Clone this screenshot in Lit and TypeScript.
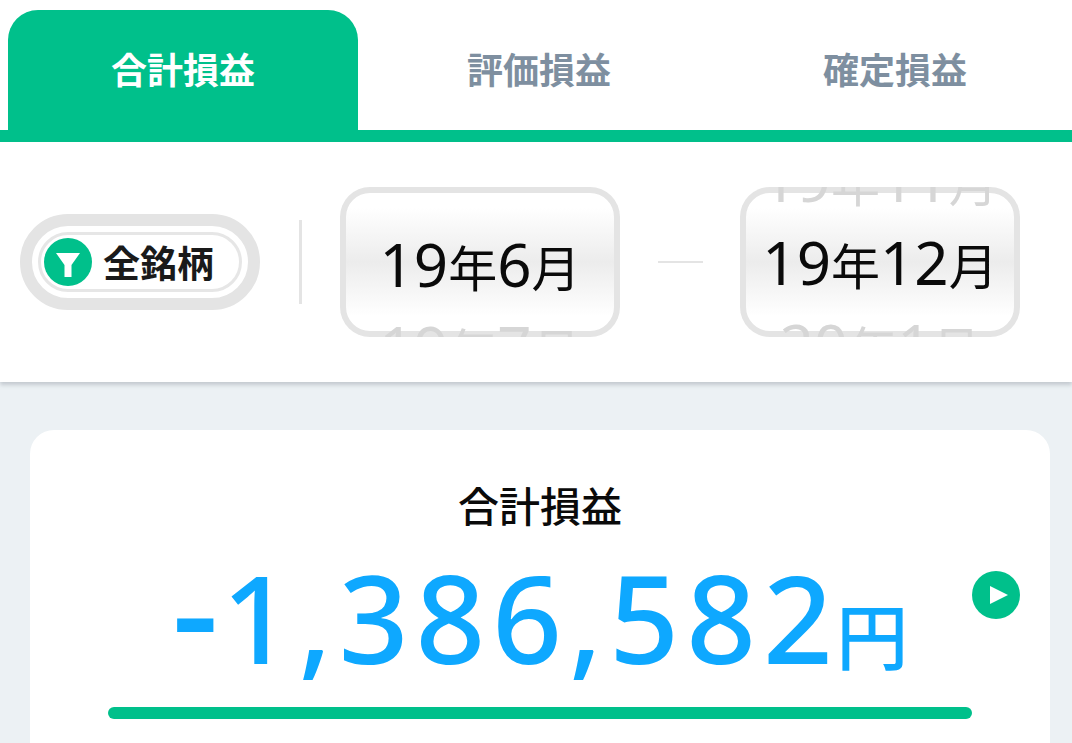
import { LitElement, html, css } from "lit";
import { customElement } from "lit/decorators.js";

const date = (y: string, m: string) =>
  html`<span class="num">${y}</span><span class="kj">年</span><span class="num">${m}</span><span class="kj">月</span>`;

@customElement("app-root")
export class AppRoot extends LitElement {
  static styles = css`
    :host {
      display: block;
      width: 1072px;
      height: 743px;
      overflow: hidden;
      background: #ecf1f4;
      font-family: "Noto Sans", "Noto Sans CJK JP", sans-serif;
    }
    .tabs {
      display: grid;
      grid-template-columns: repeat(3, 350px);
      column-gap: 6px;
      height: 120px;
      padding: 10px 0 0 8px;
      background: #fff;
      border-bottom: 12px solid #00c08b;
    }
    .tab {
      display: flex;
      align-items: center;
      justify-content: center;
      padding-bottom: 3px;
      font-size: 36px;
      font-weight: 700;
      color: #7e8fa0;
      border-radius: 30px 30px 0 0;
    }
    .tab.on {
      background: #00c08b;
      color: #fff;
    }
    .filter {
      display: flex;
      align-items: center;
      height: 240px;
      padding-left: 20px;
      background: #fff;
      box-shadow: 0 3px 4px rgba(120, 130, 140, 0.35);
      position: relative;
    }
    .pill {
      box-sizing: border-box;
      width: 240px;
      height: 96px;
      border: 12px solid #e4e4e4;
      border-radius: 48px;
      padding: 6px;
    }
    .pill-in {
      box-sizing: border-box;
      display: flex;
      align-items: center;
      gap: 11px;
      height: 60px;
      border: 3px solid #e6e6e6;
      border-radius: 30px;
      padding-left: 3px;
      font-size: 37px;
      font-weight: 700;
      color: #1a1a1a;
    }
    .ic {
      display: block;
      flex: none;
      width: 48px;
      height: 48px;
    }
    .div {
      width: 3px;
      height: 84px;
      margin: 0 38px 0 39px;
      background: #e4e4e4;
    }
    .picker {
      box-sizing: border-box;
      width: 280px;
      height: 150px;
      border-radius: 30px;
      overflow: hidden;
      display: flex;
      flex-direction: column;
      align-items: center;
      justify-content: center;
      background: linear-gradient(#fff 14%, #ececec 50%, #fff 86%);
      box-shadow: inset 0 0 0 6px #e4e4e4;
    }
    .picker.low {
      padding-top: 5px;
    }
    .row {
      flex: none;
      height: 83px;
      line-height: 83px;
      text-align: center;
      color: #d6d6d6;
      white-space: nowrap;
    }
    .row.sel {
      color: #0a0a0a;
    }
    .num {
      font-size: 60px;
    }
    .kj {
      font-size: 49px;
    }
    .dash {
      width: 45px;
      height: 2px;
      margin: 0 37px 0 38px;
      background: #e4e4e4;
    }
    .body {
      padding: 48px 22px 0 30px;
    }
    .card {
      position: relative;
      height: 340px;
      background: #fff;
      border-radius: 24px;
      padding-top: 48px;
      text-align: center;
    }
    .title {
      font-size: 41px;
      font-weight: 500;
      line-height: 56px;
      color: #0a0a0a;
    }
    .amount {
      display: flex;
      justify-content: center;
      align-items: baseline;
      color: #0ea8ff;
      line-height: 120px;
      margin-top: 14px;
    }
    .big {
      font-size: 122px;
      font-weight: 500;
      letter-spacing: 7px;
    }
    .minus {
      font-size: 146px;
      font-weight: 500;
      line-height: 120px;
      letter-spacing: 3px;
    }
    .yen {
      font-size: 72px;
      font-weight: 500;
      margin-left: -3.5px;
    }
    .play {
      position: absolute;
      top: 141px;
      left: 942px;
    }
    .bar {
      height: 12px;
      margin: 11px 78px 0;
      border-radius: 6px;
      background: #00c08b;
    }
  `;

  render() {
    return html`
      <div class="tabs">
        <div class="tab on">合計損益</div>
        <div class="tab">評価損益</div>
        <div class="tab">確定損益</div>
      </div>
      <div class="filter">
        <div class="pill">
          <div class="pill-in">
            <svg class="ic" viewBox="0 0 48 48">
              <circle cx="24" cy="24" r="24" fill="#00c08b" />
              <path d="M12 15H36L27.5 27V39H20.5V27Z" fill="#fff" />
            </svg>
            全銘柄
          </div>
        </div>
        <div class="div"></div>
        <div class="picker low">
          <div class="row"></div>
          <div class="row sel">${date("19", "6")}</div>
          <div class="row">${date("19", "7")}</div>
        </div>
        <div class="dash"></div>
        <div class="picker">
          <div class="row">${date("19", "11")}</div>
          <div class="row sel">${date("19", "12")}</div>
          <div class="row">${date("20", "1")}</div>
        </div>
      </div>
      <div class="body">
        <div class="card">
          <div class="title">合計損益</div>
          <div class="amount"><span class="minus">-</span><span class="big">1,386,582</span><span class="yen">円</span></div>
          <svg class="ic play" viewBox="0 0 48 48">
            <circle cx="24" cy="24" r="24" fill="#00c08b" />
            <path d="M18 15L36 24L18 33Z" fill="#fff" />
          </svg>
          <div class="bar"></div>
        </div>
      </div>
    `;
  }
}
